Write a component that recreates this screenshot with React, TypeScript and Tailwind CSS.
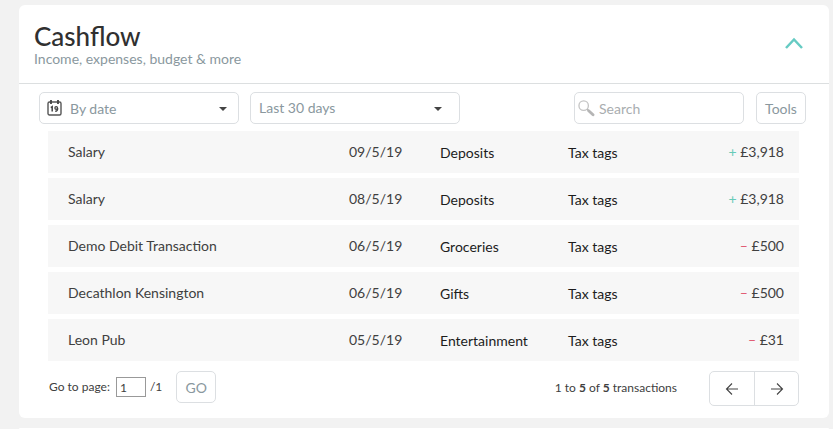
import { useState } from "react";

type Transaction = {
  id: number;
  name: string;
  date: string;
  category: string;
  amount: number;
};

const transactions: Transaction[] = [
  { id: 1, name: "Salary", date: "09/5/19", category: "Deposits", amount: 3918 },
  { id: 2, name: "Salary", date: "08/5/19", category: "Deposits", amount: 3918 },
  { id: 3, name: "Demo Debit Transaction", date: "06/5/19", category: "Groceries", amount: -500 },
  { id: 4, name: "Decathlon Kensington", date: "06/5/19", category: "Gifts", amount: -500 },
  { id: 5, name: "Leon Pub", date: "05/5/19", category: "Entertainment", amount: -31 },
];

function CalendarIcon() {
  return (
    <svg viewBox="0 0 16 18" className="pointer-events-none absolute left-2 top-[7px] h-[18px] w-4" fill="none" aria-hidden="true">
      <rect x="1" y="3" width="13" height="13" rx="1.5" stroke="#555" strokeWidth="1.4" />
      <path d="M4 1v4M11 1v4" stroke="#444" strokeWidth="1.8" />
      <path d="M3.8 8.6l1.4-.9v4.8" stroke="#444" strokeWidth="1.5" />
      <circle cx="9.2" cy="9" r="1.3" stroke="#444" strokeWidth="1.3" />
      <path d="M10.6 9c.2 2-.5 3.3-2.4 3.3" stroke="#444" strokeWidth="1.4" />
    </svg>
  );
}

function SearchIcon() {
  return (
    <svg viewBox="0 0 18 18" className="pointer-events-none absolute left-1 top-2 h-[17px] w-[17px]" fill="none" aria-hidden="true">
      <circle cx="6" cy="6" r="5" stroke="#c4c4c4" strokeWidth="1.4" />
      <path d="M9.6 9.6l2 2" stroke="#b8b8b8" strokeWidth="1.5" />
      <path d="M11.3 11.3l4.6 4.4" stroke="#b5b5b5" strokeWidth="3" strokeLinecap="round" />
    </svg>
  );
}

function Arrow({ flip = false }: { flip?: boolean }) {
  return (
    <svg viewBox="0 0 14 12" className="h-3 w-[14px]" fill="none" stroke="#444" strokeWidth="1.1" aria-hidden="true">
      <path d={flip ? "M1 6h12M7 .5L12.5 6 7 11.5" : "M13 6H1M7 .5L1.5 6 7 11.5"} />
    </svg>
  );
}

export default function App() {
  const [open, setOpen] = useState(true);
  const [page, setPage] = useState("1");
  const [search, setSearch] = useState("");

  const rows = transactions.filter((t) => t.name.toLowerCase().includes(search.toLowerCase()));

  return (
    <div className="flex min-h-screen flex-col gap-[10px] bg-[#f2f2f2] pl-[19px] pr-1 pt-[5px] font-['Lato','Open_Sans',sans-serif] text-sm text-[#404040]">
      <section className="rounded-md bg-white pb-3">
        <header className="flex items-center justify-between border-b border-[#dcdfe0] pb-[15px] pl-[15px] pr-[26px] pt-[17px]">
          <div>
            <h1 className="text-[26px] font-medium leading-7 text-[#303030]">Cashflow</h1>
            <p className="leading-[18px] text-[#8a989e]">Income, expenses, budget &amp; more</p>
          </div>
          <button type="button" aria-label="Toggle cashflow" aria-expanded={open} onClick={() => setOpen(!open)} className="pb-1">
            <svg viewBox="0 0 18 12" className="h-3 w-[18px]" fill="none" aria-hidden="true">
              <path d="M1 11L9 2.5 17 11" stroke="#66cbc3" strokeWidth="2.5" />
            </svg>
          </button>
        </header>

        {open && (
          <>
            <div className="flex items-center pl-5 pr-[23px] pt-2 text-[#8a989e]">
              <div className="relative w-[200px]">
                <CalendarIcon />
                <select aria-label="Sort" className="h-8 w-full appearance-none rounded-[5px] border border-[#dcdfe2] bg-white pl-[30px] pt-[2px]">
                  <option>By date</option>
                  <option>By category</option>
                </select>
                <svg viewBox="0 0 8 4" className="pointer-events-none absolute right-3 top-[15px] h-1 w-2" aria-hidden="true">
                  <path d="M0 0h8L4 4z" fill="#444" />
                </svg>
              </div>
              <div className="relative ml-[11px] w-[210px]">
                <select aria-label="Period" className="h-8 w-full appearance-none rounded-[5px] border border-[#dcdfe2] bg-white pl-2">
                  <option>Last 30 days</option>
                  <option>Last 90 days</option>
                </select>
                <svg viewBox="0 0 8 4" className="pointer-events-none absolute right-[18px] top-[15px] h-1 w-2" aria-hidden="true">
                  <path d="M0 0h8L4 4z" fill="#444" />
                </svg>
              </div>
              <div className="relative ml-auto w-[170px]">
                <SearchIcon />
                <input
                  type="search"
                  aria-label="Search"
                  placeholder="Search"
                  value={search}
                  onChange={(e) => setSearch(e.target.value)}
                  className="h-8 w-full rounded-[5px] border border-[#dcdfe2] pl-6 placeholder:text-[#a9adaf]"
                />
              </div>
              <button type="button" className="ml-3 h-8 w-[50px] rounded-[5px] border border-[#dcdfe2] pt-px">
                Tools
              </button>
            </div>

            <div className="pl-[29px] pr-[30px] pt-[2px]">
              <table className="w-full table-fixed border-separate border-spacing-x-0 border-spacing-y-[5px]">
                <colgroup>
                  <col />
                  <col className="w-[91px]" />
                  <col className="w-[128px]" />
                  <col className="w-[112px]" />
                  <col className="w-[119px]" />
                </colgroup>
                <tbody>
                  {rows.map((t) => (
                    <tr key={t.id} className="h-[42px] bg-[#f7f7f7]">
                      <td className="pl-5">{t.name}</td>
                      <td>{t.date}</td>
                      <td className="pt-[2px] text-[#1c1c1c]">{t.category}</td>
                      <td className="pt-[2px] text-[#1c1c1c]">Tax tags</td>
                      <td className="pr-[15px] text-right">
                        <span className={t.amount > 0 ? "text-[#66cbb8]" : "text-[#e0536c]"}>{t.amount > 0 ? "+" : "–"}</span>{" "}
                        £{Math.abs(t.amount).toLocaleString("en-GB")}
                      </td>
                    </tr>
                  ))}
                </tbody>
              </table>

              <div className="flex items-start pt-[5px] text-xs">
                <div className="flex h-8 items-center pl-px">
                  <label htmlFor="page">Go to page:</label>
                  <input
                    id="page"
                    value={page}
                    onChange={(e) => setPage(e.target.value)}
                    className="ml-1.5 h-5 w-[30px] border border-[#999] pl-[3px]"
                  />
                  <span className="ml-1">/1</span>
                  <button type="button" className="ml-[14px] h-8 w-10 rounded-[5px] border border-[#dcdfe2] pt-px text-sm text-[#8a989e]">
                    GO
                  </button>
                </div>
                <p className="ml-auto mr-8 leading-[34px]">
                  1 to <b className="font-bold">5</b> of <b className="font-bold">5</b> transactions
                </p>
                <div className="flex h-[35px] rounded-[5px] border border-[#dcdfe2]">
                  <button type="button" aria-label="Previous page" className="flex w-[45px] items-center justify-center border-r border-[#dcdfe2]">
                    <Arrow />
                  </button>
                  <button type="button" aria-label="Next page" className="flex w-[43px] items-center justify-center">
                    <Arrow flip />
                  </button>
                </div>
              </div>
            </div>
          </>
        )}
      </section>
      <section className="flex-1 rounded-t-md bg-white" />
    </div>
  );
}
